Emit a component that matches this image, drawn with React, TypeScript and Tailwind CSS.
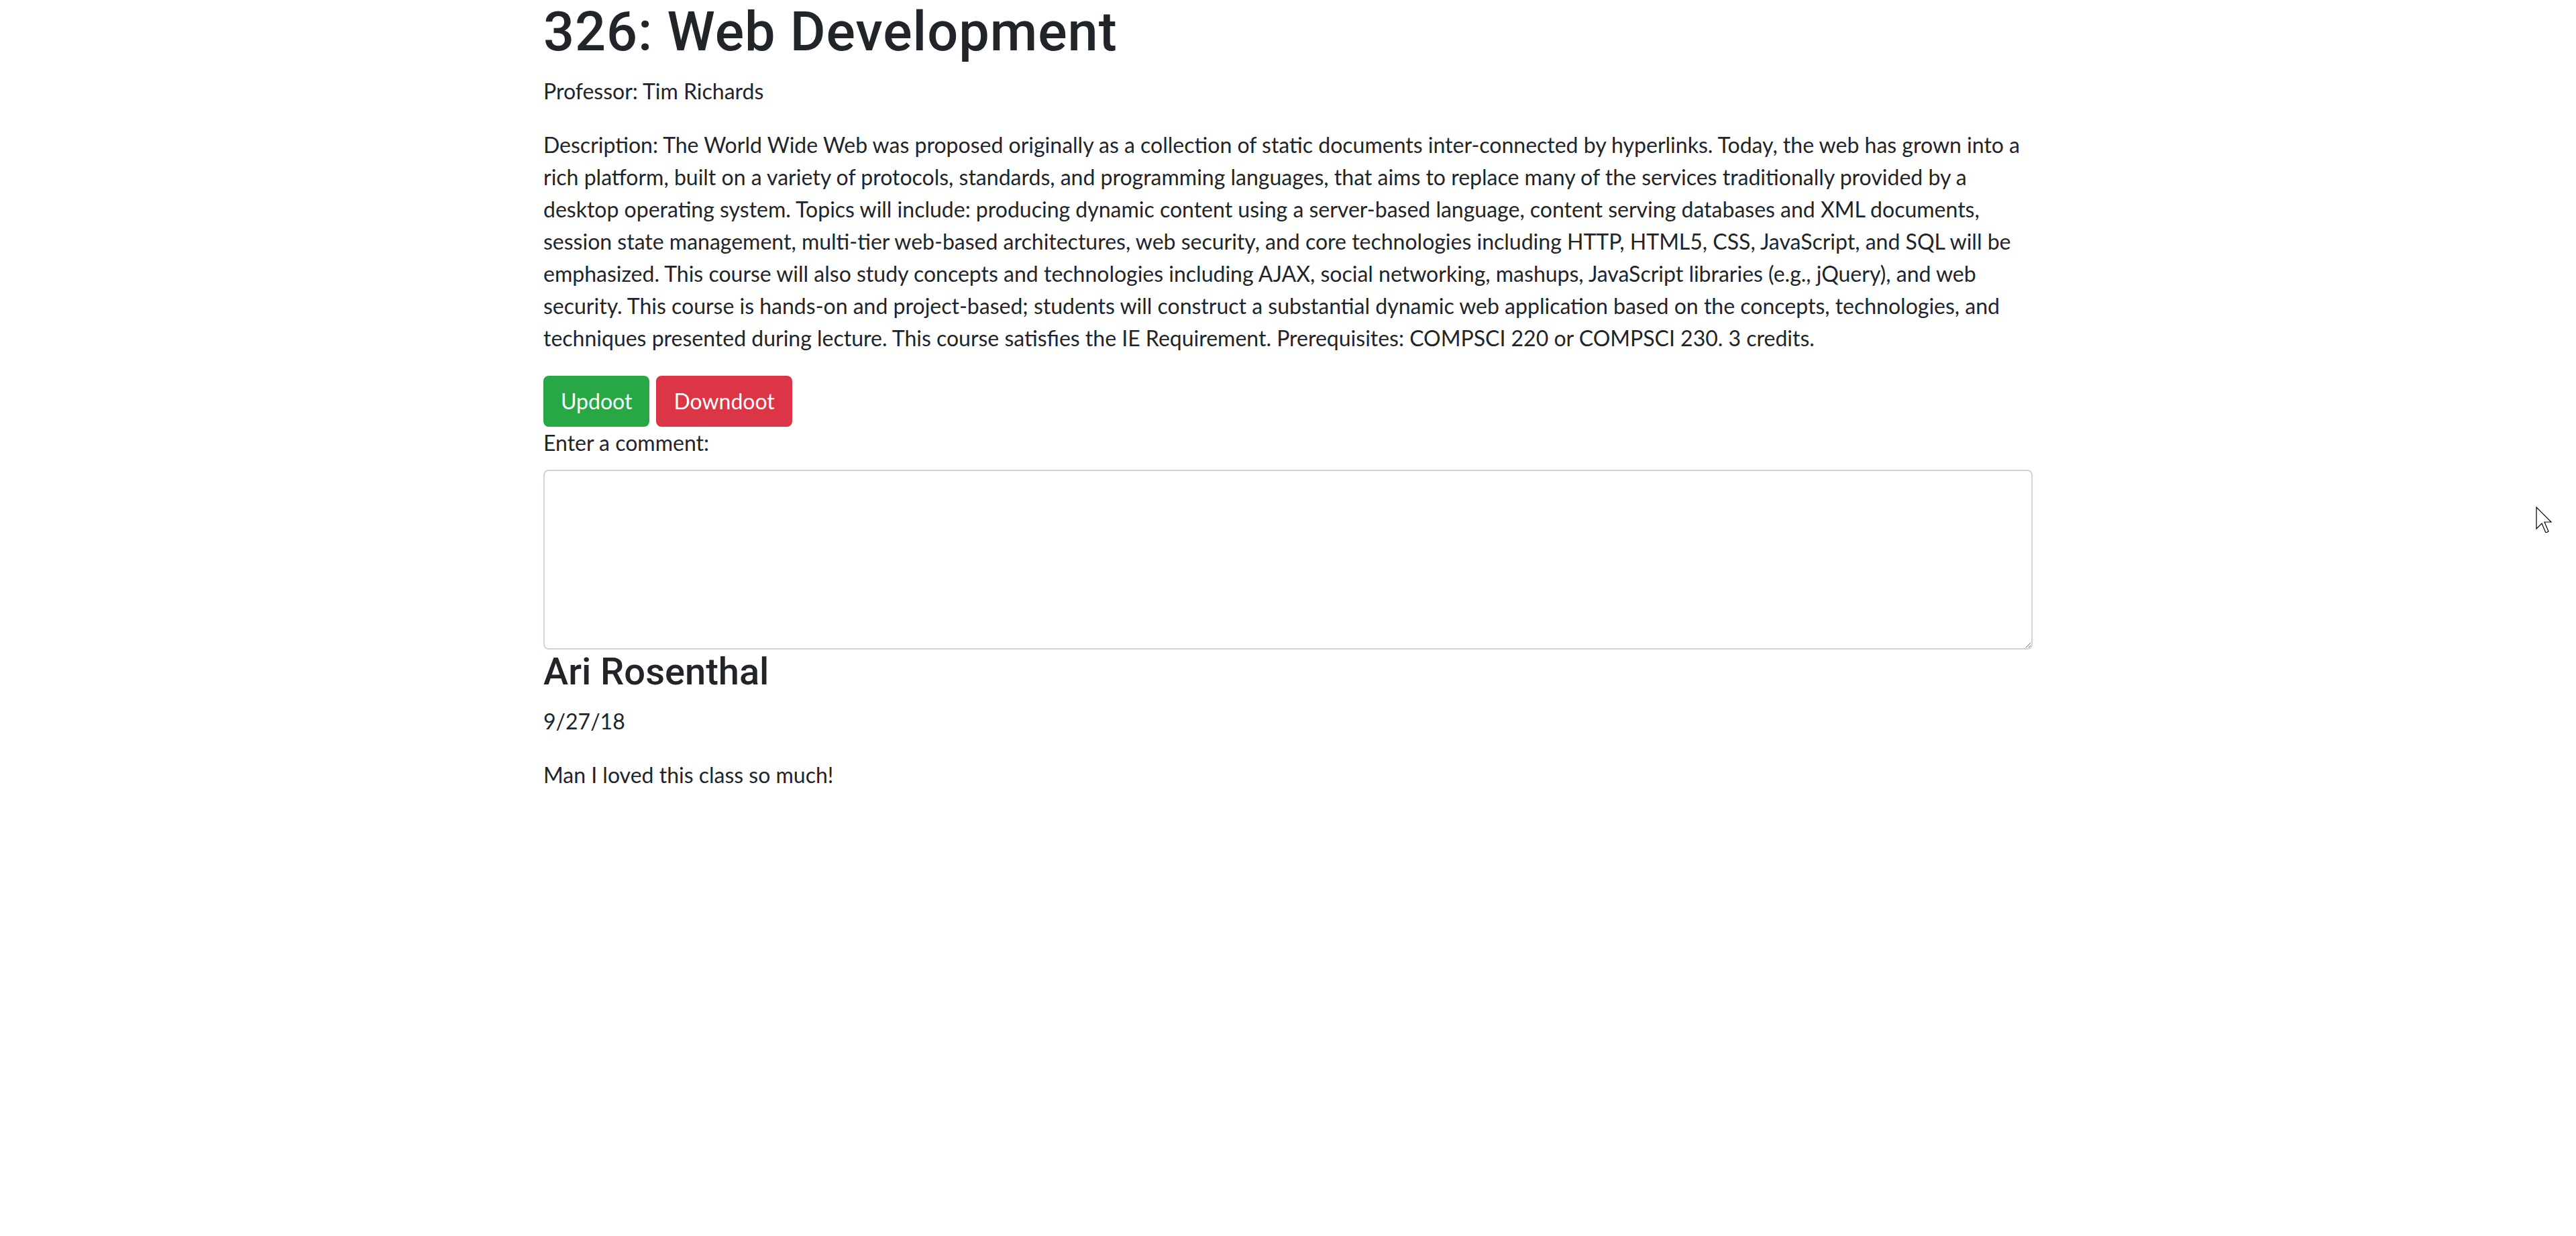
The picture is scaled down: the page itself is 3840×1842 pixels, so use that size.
import React from 'react'

const descriptionLines = [
  'Description: The World Wide Web was proposed originally as a collection of static documents inter-connected by hyperlinks. Today, the web has grown into a',
  'rich platform, built on a variety of protocols, standards, and programming languages, that aims to replace many of the services traditionally provided by a',
  'desktop operating system. Topics will include: producing dynamic content using a server-based language, content serving databases and XML documents,',
  'session state management, multi-tier web-based architectures, web security, and core technologies including HTTP, HTML5, CSS, JavaScript, and SQL will be',
  'emphasized. This course will also study concepts and technologies including AJAX, social networking, mashups, JavaScript libraries (e.g., jQuery), and web',
  'security. This course is hands-on and project-based; students will construct a substantial dynamic web application based on the concepts, technologies, and',
  'techniques presented during lecture. This course satisfies the IE Requirement. Prerequisites: COMPSCI 220 or COMPSCI 230. 3 credits.',
]

function Cursor() {
  return (
    <svg
      className="absolute left-[3779px] top-[754px]"
      width="26"
      height="40"
      viewBox="-1 -1 13 20"
    >
      <path
        d="M0 0 L0 16 L4 12 L7 19 L9 18 L6 11 L11 11 Z"
        fill="#fff"
        stroke="#000"
        strokeWidth="0.6"
        strokeLinejoin="miter"
      />
    </svg>
  )
}

export default function App() {
  return (
    <div className="relative min-h-screen bg-white text-[#212529] font-['Lato',sans-serif]">
      <div className="mx-auto w-[2220px]">
        {/* Course header */}
        <h1 className="text-[81px] leading-[96px] font-medium tracking-[1px] mb-4 font-['Roboto',sans-serif]">
          326: Web Development
        </h1>
        <p className="text-[32px] leading-[1.5] mb-8">Professor: Tim Richards</p>
        <p className="text-[32px] leading-[1.5] mb-8 whitespace-nowrap">
          {descriptionLines.map((line, i) => (
            <React.Fragment key={i}>
              {line}
              {i < descriptionLines.length - 1 && <br />}
            </React.Fragment>
          ))}
        </p>

        {/* Votes */}
        <div className="flex gap-[10px]">
          <button className="bg-[#28a745] border-2 border-[#28a745] text-white text-[32px] leading-[1.5] px-6 py-3 rounded-lg">
            Updoot
          </button>
          <button className="bg-[#dc3545] border-2 border-[#dc3545] text-white text-[32px] leading-[1.5] px-6 py-3 rounded-lg">
            Downdoot
          </button>
        </div>

        {/* Comment form */}
        <label className="block text-[32px] leading-[1.5] mb-4">Enter a comment:</label>
        <textarea
          rows={5}
          className="block w-full h-[268px] border-2 border-[#ced4da] rounded-lg px-6 py-3 text-[32px] leading-[1.5] text-[#495057] outline-none"
        />

        {/* Comments */}
        <h3 className="text-[56px] leading-[1.2] font-medium mb-4 font-['Roboto',sans-serif]">
          Ari Rosenthal
        </h3>
        <p className="text-[32px] leading-[1.5] mb-8">9/27/18</p>
        <p className="text-[32px] leading-[1.5] mb-8">Man I loved this class so much!</p>
      </div>
      <Cursor />
    </div>
  )
}
